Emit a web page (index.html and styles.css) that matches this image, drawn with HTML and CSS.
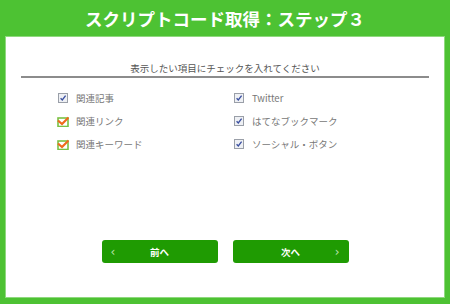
FILE: index.html
```html
<!DOCTYPE html>
<html lang="ja">
<head>
<meta charset="utf-8">
<link rel="stylesheet" href="styles.css">
</head>
<body>
<div class="frame">
  <h1 class="title">スクリプトコード取得：ステップ３</h1>
  <div class="panel">
    <div class="lead">表示したい項目にチェックを入れてください</div>
    <div class="grid">
      <div class="col">
        <label class="item"><span class="cb"><svg viewBox="0 0 10 10" width="10" height="10"><rect x="0.5" y="0.5" width="9" height="9" fill="#eef0f4" stroke="#9a9fa8"/><path d="M2.6 5.2 L4.3 7 L7.6 2.6" fill="none" stroke="#3a4fa0" stroke-width="1.3"/></svg></span>関連記事</label>
        <label class="item"><span class="cb"><svg viewBox="0 0 12 11" width="12" height="11"><rect x="1" y="2" width="10" height="8.5" fill="#ffffff" stroke="#7ac143" stroke-width="1.6"/><path d="M1 4.5 L5 8 L11.5 1.5" fill="none" stroke="#f06a1c" stroke-width="2.2"/></svg></span>関連リンク</label>
        <label class="item"><span class="cb"><svg viewBox="0 0 12 11" width="12" height="11"><rect x="1" y="2" width="10" height="8.5" fill="#ffffff" stroke="#7ac143" stroke-width="1.6"/><path d="M1 4.5 L5 8 L11.5 1.5" fill="none" stroke="#f06a1c" stroke-width="2.2"/></svg></span>関連キーワード</label>
      </div>
      <div class="col">
        <label class="item"><span class="cb"><svg viewBox="0 0 10 10" width="10" height="10"><rect x="0.5" y="0.5" width="9" height="9" fill="#eef0f4" stroke="#9a9fa8"/><path d="M2.6 5.2 L4.3 7 L7.6 2.6" fill="none" stroke="#3a4fa0" stroke-width="1.3"/></svg></span>Twitter</label>
        <label class="item"><span class="cb"><svg viewBox="0 0 10 10" width="10" height="10"><rect x="0.5" y="0.5" width="9" height="9" fill="#eef0f4" stroke="#9a9fa8"/><path d="M2.6 5.2 L4.3 7 L7.6 2.6" fill="none" stroke="#3a4fa0" stroke-width="1.3"/></svg></span>はてなブックマーク</label>
        <label class="item"><span class="cb"><svg viewBox="0 0 10 10" width="10" height="10"><rect x="0.5" y="0.5" width="9" height="9" fill="#eef0f4" stroke="#9a9fa8"/><path d="M2.6 5.2 L4.3 7 L7.6 2.6" fill="none" stroke="#3a4fa0" stroke-width="1.3"/></svg></span>ソーシャル・ボタン</label>
      </div>
    </div>
    <div class="buttons">
      <a class="btn prev"><span class="chev">&lsaquo;</span><span class="lbl">前へ</span><span class="chev hidden">&rsaquo;</span></a>
      <a class="btn next"><span class="chev hidden">&lsaquo;</span><span class="lbl">次へ</span><span class="chev">&rsaquo;</span></a>
    </div>
  </div>
</div>
</body>
</html>
```
FILE: styles.css
```css
html, body {
  margin: 0;
  padding: 0;
}
body {
  width: 450px;
  height: 304px;
  background: #4dc233;
  font-family: "Noto Sans CJK JP", "Noto Sans", sans-serif;
  overflow: hidden;
}
.frame {
  display: flex;
  flex-direction: column;
  height: 304px;
  padding: 0 6px 7px 6px;
  box-sizing: border-box;
}
.title {
  margin: 0;
  height: 37px;
  line-height: 38px;
  text-align: center;
  color: #ffffff;
  font-size: 17.5px;
  font-weight: bold;
}
.panel {
  flex: 1;
  background: #ffffff;
  box-shadow: 0 0 0 1px #8fd97e;
  display: flex;
  flex-direction: column;
  padding: 25px 15px 0 15px;
}
.lead {
  font-size: 9.5px;
  color: #555555;
  text-align: center;
  line-height: 13px;
  padding-bottom: 1px;
  border-bottom: 2px solid #8c8c8c;
}
.grid {
  display: flex;
  padding: 13px 0 0 36px;
}
.col {
  display: flex;
  flex-direction: column;
  gap: 9px;
}
.col:first-child {
  width: 176px;
}
.item {
  display: flex;
  align-items: center;
  height: 14px;
  font-size: 9.5px;
  color: #777777;
}
.cb {
  width: 12px;
  height: 12px;
  margin-right: 7px;
  display: flex;
  align-items: center;
  justify-content: center;
}
.buttons {
  display: flex;
  justify-content: center;
  gap: 15px;
  margin-top: 89px;
}
.btn {
  width: 116px;
  height: 23px;
  background: #1f9b02;
  border-radius: 3px;
  display: flex;
  align-items: center;
  justify-content: space-between;
  padding: 0 9px;
  box-sizing: border-box;
  color: #ffffff;
  font-size: 9.5px;
  font-weight: bold;
}
.chev {
  font-weight: normal;
  font-size: 12px;
  color: #b9e2ad;
  font-family: "DejaVu Sans", sans-serif;
  line-height: 1;
}
.hidden {
  visibility: hidden;
}
```
